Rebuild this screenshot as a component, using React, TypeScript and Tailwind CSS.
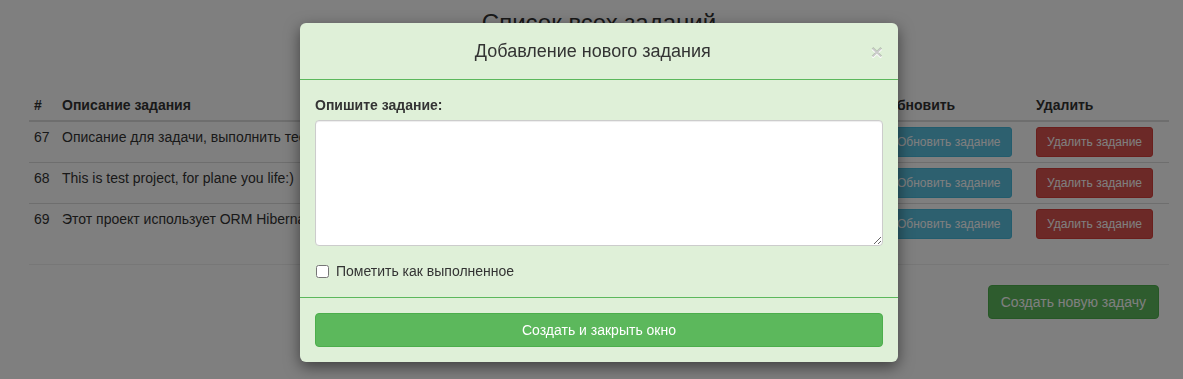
const tasks = [
  { id: 67, text: "Описание для задачи, выполнить тестовое задание" },
  { id: 68, text: "This is test project, for plane you life:)" },
  { id: 69, text: "Этот проект использует ORM Hibernate и Spring" },
];

const TaskRow = (props: { id: number; text: string; first: boolean }) => {
  return (
    <div
      className={`grid grid-cols-[28px_824px_150px_138px] ${
        props.first ? "" : "border-t border-[#dddddd]"
      }`}
    >
      <div className="p-[5px] leading-5">{props.id}</div>
      <div className="p-[5px] leading-5 whitespace-nowrap overflow-hidden">{props.text}</div>
      <div className="p-[5px]">
        <button
          type="button"
          className="h-[30px] px-[10px] text-[12px] leading-[18px] text-white bg-[#5bc0de] border border-[#46b8da] rounded-[3px]"
        >
          Обновить задание
        </button>
      </div>
      <div className="p-[5px]">
        <button
          type="button"
          className="h-[30px] px-[10px] text-[12px] leading-[18px] text-white bg-[#d9534f] border border-[#d43f3a] rounded-[3px]"
        >
          Удалить задание
        </button>
      </div>
    </div>
  );
};

const AddTaskModal = () => {
  return (
    <div className="absolute left-[300px] top-[23px] w-[598px] bg-[#dff0d8] rounded-[6px] shadow-[0_5px_15px_rgba(0,0,0,0.5)] text-[#333333]">
      <div className="flex items-start p-[15px] border-b border-[#5cb85c]">
        <h4 className="flex-1 text-center text-[18px] leading-[26px]">Добавление нового задания</h4>
        <button
          type="button"
          className="mt-[3px] text-[21px] leading-[21px] font-bold text-black/20 [text-shadow:0_1px_0_#fff]"
        >
          ×
        </button>
      </div>
      <div className="pt-[15px] px-[15px] pb-[16px] text-[14px]">
        <label className="block font-bold leading-5 mb-[5px]">Опишите задание:</label>
        <textarea className="block w-full h-[126px] bg-white border border-[#cccccc] rounded-[4px] shadow-[inset_0_1px_1px_rgba(0,0,0,0.075)] px-3 py-[6px] outline-none" />
        <label className="flex items-center gap-[7px] mt-[15px] leading-5">
          <input type="checkbox" className="w-[13px] h-[13px] ml-[1px]" />
          Пометить как выполненное
        </label>
      </div>
      <div className="p-[15px] border-t border-[#5cb85c]">
        <button
          type="button"
          className="w-full h-[34px] text-[14px] text-white bg-[#5cb85c] border border-[#4cae4c] rounded-[4px]"
        >
          Создать и закрыть окно
        </button>
      </div>
    </div>
  );
};

export default function App() {
  return (
    <div className="relative w-[1183px] h-[379px] overflow-hidden bg-white text-[#333333] text-[14px] font-['Liberation_Sans',Arial,sans-serif]">
      <div className="ml-[29px] w-[1140px] pt-[10px]">
        <h3 className="text-center text-[24px] leading-[26px]">Список всех заданий</h3>
        <div className="mt-[54px]">
          <div className="grid grid-cols-[28px_824px_150px_138px] font-bold border-b-2 border-[#dddddd]">
            <div className="p-[5px] leading-5">#</div>
            <div className="p-[5px] leading-5">Описание задания</div>
            <div className="p-[5px] leading-5">Обновить</div>
            <div className="p-[5px] leading-5">Удалить</div>
          </div>
          {tasks.map((task, i) => (
            <TaskRow key={task.id} id={task.id} text={task.text} first={i === 0} />
          ))}
        </div>
        <hr className="mt-[20px] border-t border-[#eeeeee]" />
        <div className="flex justify-end mt-[20px] mr-[10px]">
          <button
            type="button"
            className="h-[34px] px-3 text-[14px] text-white bg-[#5cb85c] border border-[#4cae4c] rounded-[4px]"
          >
            Создать новую задачу
          </button>
        </div>
      </div>

      <div className="fixed inset-0 bg-black/50" />
      <AddTaskModal />
    </div>
  );
}
